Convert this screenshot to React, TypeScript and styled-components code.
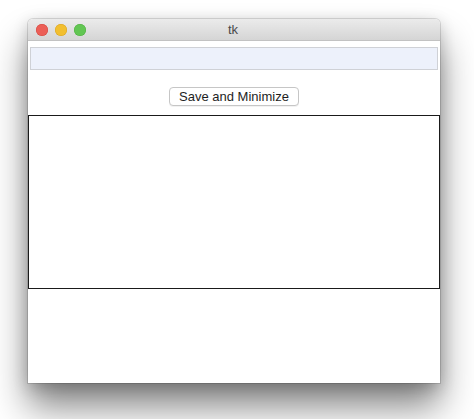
import styled, { createGlobalStyle } from "styled-components";

const Global = createGlobalStyle`
  html, body {
    margin: 0;
    padding: 0;
    background: #ffffff;
  }
  body {
    font-family: "Liberation Sans", Arial, sans-serif;
  }
`;

const Stage = styled.div`
  width: 474px;
  height: 419px;
  padding: 19px 0 0 28px;
  box-sizing: border-box;
  overflow: hidden;
  background: #ffffff;
`;

const Window = styled.div`
  width: 412px;
  height: 364px;
  display: flex;
  flex-direction: column;
  background: #ffffff;
  border-radius: 5px 5px 0 0;
  box-shadow: 0 0 0 1px rgba(0, 0, 0, 0.12), 0 24px 36px rgba(0, 0, 0, 0.48),
    0 4px 16px rgba(0, 0, 0, 0.2);
`;

const TitleBar = styled.div`
  position: relative;
  height: 22px;
  flex: none;
  display: flex;
  align-items: center;
  justify-content: center;
  background: linear-gradient(#ebebeb, #d5d5d5);
  border-bottom: 1px solid #c2c2c2;
  border-radius: 5px 5px 0 0;
  box-sizing: border-box;
`;

const Lights = styled.div`
  position: absolute;
  left: 8px;
  top: 5px;
  display: flex;
  gap: 7px;
`;

const Light = styled.span<{ $fill: string; $edge: string }>`
  width: 12px;
  height: 12px;
  border-radius: 50%;
  background: ${(p) => p.$fill};
  box-shadow: inset 0 0 0 0.5px ${(p) => p.$edge};
`;

const Title = styled.span`
  font-size: 13px;
  color: #4a4a4a;
  margin-left: -2px;
`;

const Body = styled.div`
  flex: 1;
  display: flex;
  flex-direction: column;
  align-items: stretch;
`;

const Entry = styled.input`
  margin: 6px 2px 0;
  height: 23px;
  box-sizing: border-box;
  border: 1px solid #cfd1d6;
  background: #edf1fb;
  outline: none;
  font: 13px "Liberation Sans", Arial, sans-serif;
`;

const ButtonRow = styled.div`
  display: flex;
  justify-content: center;
  padding: 17px 0 9px;
`;

const Button = styled.button`
  width: 130px;
  height: 19px;
  padding: 0;
  box-sizing: border-box;
  border: 1px solid #c6c6c6;
  border-radius: 4px;
  background: #ffffff;
  box-shadow: 0 1px 0 rgba(0, 0, 0, 0.05);
  font: 13px "Liberation Sans", Arial, sans-serif;
  color: #1e1e1e;
  line-height: 17px;
`;

const Canvas = styled.div`
  height: 174px;
  box-sizing: border-box;
  border: 1px solid #1a1a1a;
  background: #ffffff;
`;

export default function App() {
  return (
    <>
      <Global />
      <Stage>
        <Window>
          <TitleBar>
            <Lights>
              <Light $fill="#ec5f57" $edge="#d2473f" />
              <Light $fill="#f2bf2f" $edge="#d8a322" />
              <Light $fill="#62c653" $edge="#4fae3f" />
            </Lights>
            <Title>tk</Title>
          </TitleBar>
          <Body>
            <Entry />
            <ButtonRow>
              <Button>Save and Minimize</Button>
            </ButtonRow>
            <Canvas />
          </Body>
        </Window>
      </Stage>
    </>
  );
}
